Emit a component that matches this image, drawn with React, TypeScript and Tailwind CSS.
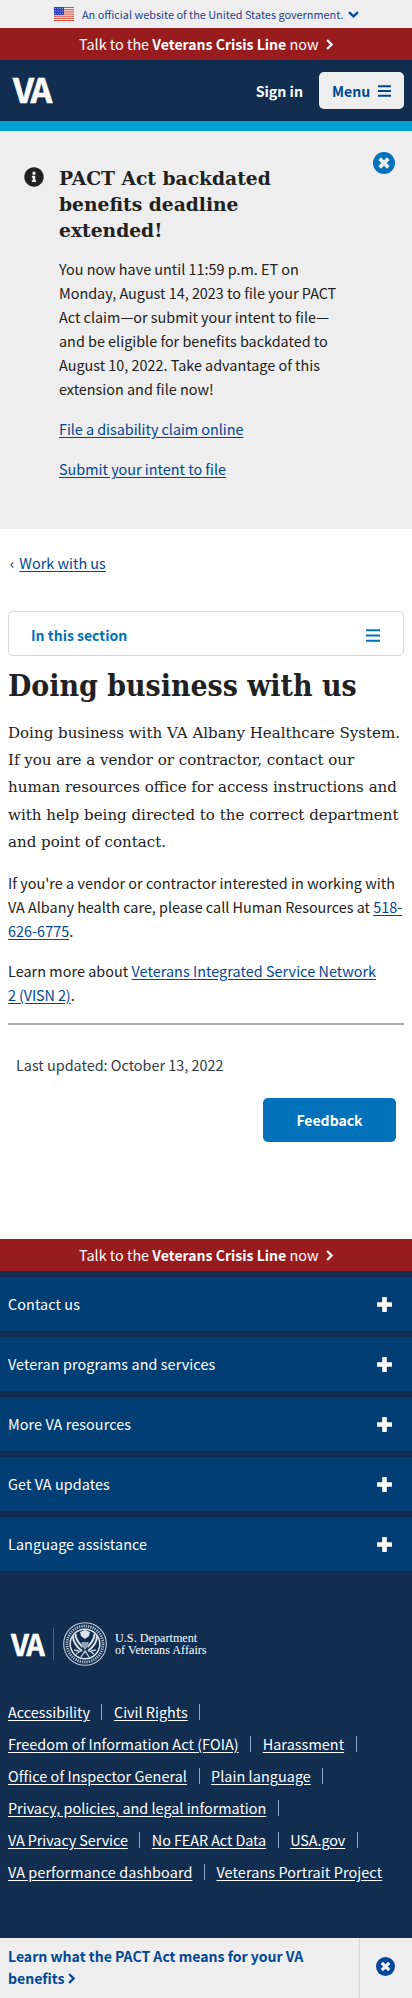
import React from "react";
import { FaInfoCircle } from "react-icons/fa";

const footerSections = [
  "Contact us",
  "Veteran programs and services",
  "More VA resources",
  "Get VA updates",
  "Language assistance",
];

const footerLinks = [
  { tracking: "tracking-[0px]", labels: ["Accessibility", "Civil Rights"] },
  {
    tracking: "tracking-[0.06px]",
    labels: ["Freedom of Information Act (FOIA)", "Harassment"],
  },
  { tracking: "tracking-[0.06px]", labels: ["Office of Inspector General", "Plain language"] },
  { tracking: "tracking-[0px]", labels: ["Privacy, policies, and legal information"] },
  {
    tracking: "tracking-[-0.07px]",
    labels: ["VA Privacy Service", "No FEAR Act Data", "USA.gov"],
  },
  {
    tracking: "tracking-[0.1px]",
    labels: ["VA performance dashboard", "Veterans Portrait Project"],
  },
];

type IconProps = { className: string };

function ChevronRight({ className }: IconProps) {
  return (
    <svg viewBox="0 0 7 11" className={className} fill="none" stroke="currentColor" strokeWidth="2.2">
      <path d="M1.1 1l4.5 4.5L1.1 10" />
    </svg>
  );
}

function ChevronDown({ className }: IconProps) {
  return (
    <svg viewBox="0 0 11 7" className={className} fill="none" stroke="currentColor" strokeWidth="2.2">
      <path d="M1 1.1l4.5 4.3L10 1.1" />
    </svg>
  );
}

function Bars({ className }: IconProps) {
  return (
    <svg viewBox="0 0 14 13" className={className} stroke="currentColor" strokeWidth="2.1">
      <path d="M0 1.3h14M0 6.5h14M0 11.7h14" />
    </svg>
  );
}

function Plus({ className }: IconProps) {
  return (
    <svg viewBox="0 0 15 15" className={className} fill="currentColor">
      <path d="M5.2.6a.6.6 0 0 1 .6-.6h3.4a.6.6 0 0 1 .6.6v4.6h4.6a.6.6 0 0 1 .6.6v3.4a.6.6 0 0 1-.6.6H9.8v4.6a.6.6 0 0 1-.6.6H5.8a.6.6 0 0 1-.6-.6V9.8H.6a.6.6 0 0 1-.6-.6V5.8a.6.6 0 0 1 .6-.6h4.6z" />
    </svg>
  );
}

function CloseCircle({ className }: IconProps) {
  return (
    <svg viewBox="0 0 22 22" className={className} fill="none">
      <circle cx="11" cy="11" r="11" fill="currentColor" />
      <path d="M6.7 6.7l8.6 8.6M15.3 6.7l-8.6 8.6" stroke="#eeeeee" strokeWidth="3.8" />
    </svg>
  );
}

function Flag() {
  return (
    <svg viewBox="0 0 20 14" className="h-[14px] w-5 shrink-0">
      <rect width="20" height="14" fill="#fff" />
      {[0, 2.15, 4.3, 6.45, 8.6, 10.75, 12.9].map((y) => (
        <rect key={y} y={y} width="20" height="1.15" fill="#dc4a35" />
      ))}
      <rect width="10" height="8" fill="#2c3fb8" />
      {[1.5, 4, 6.5].map((y) =>
        [1.5, 3.8, 6.1, 8.4].map((x) => (
          <circle key={`${x}-${y}`} cx={x} cy={y} r="0.5" fill="#c9d0f5" />
        )),
      )}
    </svg>
  );
}

function Seal() {
  return (
    <svg viewBox="0 0 44 44" className="h-11 w-11 shrink-0" fill="none">
      <circle cx="22" cy="22" r="21.3" stroke="#c3cfdb" strokeWidth="1.1" />
      <circle cx="22" cy="22" r="18" stroke="#a9b8c8" strokeWidth="2.8" strokeDasharray="1.3 1" />
      <circle cx="22" cy="22" r="14.8" stroke="#e4ebf2" strokeWidth="1.5" />
      <path
        d="M10 14c0 8 5 12 9 15M34 14c0 8-5 12-9 15M12.5 12c0 6 4 10 7 13M31.5 12c0 6-4 10-7 13"
        stroke="#dce4ec"
        strokeWidth="2"
      />
      <path d="M17 10l5-2 5 2-1 4-4 3-4-3z" fill="#dce4ec" />
      <path d="M18.5 20h7v4L22 28l-3.5-4z" fill="#8fa3b7" />
      <path
        d="M13 32l6-4M31 32l-6-4M18 35l4-6 4 6M11 28l5 1M33 28l-5 1"
        stroke="#c3cfdb"
        strokeWidth="1.3"
      />
    </svg>
  );
}

function CrisisLine() {
  return (
    <div className="flex h-8 items-center bg-[#981b1e] pl-[79px] text-white">
      <span className="w-[238px] whitespace-nowrap">
        Talk to the <b className="text-[14.05px]">Veterans Crisis Line</b> now
      </span>
      <ChevronRight className="ml-[9px] h-[11px] w-[7px]" />
    </div>
  );
}

function Link({ children }: { children: React.ReactNode }) {
  return (
    <a href="#" className="text-[#004795] underline underline-offset-2">
      {children}
    </a>
  );
}

export default function App() {
  return (
    <div className="flex h-[1998px] w-[412px] flex-col bg-white font-['Noto_Sans_CJK_SC',sans-serif] text-[14.4px] leading-6 text-[#212121]">
      <div className="flex h-7 items-center bg-[#eeeeee] pl-[54px] text-[10.9px]">
        <Flag />
        <span className="ml-2 w-[261px] whitespace-nowrap text-[#1d3f94]">
          An official website of the United States government.
        </span>
        <ChevronDown className="ml-[5px] h-[7px] w-[11px] text-[#004795]" />
      </div>
      <CrisisLine />
      <header className="flex h-[71px] items-center border-b-10 border-[#02a3d1] bg-[#112e51] pr-2 pl-[13px]">
        <span className="-mt-[3px] text-[34px] font-bold tracking-[-2.8px] text-white [-webkit-text-stroke:0.6px_white]">
          VA
        </span>
        <span className="ml-auto text-[14.2px] font-bold text-white">Sign in</span>
        <button className="ml-4 flex h-[37px] w-[85px] items-center justify-between rounded-[5px] bg-[#eeeeee] pr-[7px] pl-[13px] text-[14.1px] font-bold text-[#004795]">
          Menu
          <Bars className="mr-[6px] h-3 w-[13px]" />
        </button>
      </header>

      <section className="flex h-[398px] bg-[#eeeeee] pt-[34px] pl-6">
        <FaInfoCircle className="mt-[2px] h-5 w-5 shrink-0" />
        <div className="ml-[15px] w-[285px] shrink-0">
          <h2 className="font-['DejaVu_Serif',serif] text-[18.7px] leading-[26px] font-bold whitespace-nowrap">
            PACT Act backdated
            <br />
            benefits deadline
            <br />
            extended!
          </h2>
          <p className="mt-[14px] whitespace-nowrap">
            You now have until 11:59 p.m. ET on
            <br />
            Monday, August 14, 2023 to file your PACT
            <br />
            Act claim—or submit your intent to file—
            <br />
            and be eligible for benefits backdated to
            <br />
            August 10, 2022. Take advantage of this
            <br />
            extension and file now!
          </p>
          <p className="mt-4 tracking-[-0.04px]">
            <Link>File a disability claim online</Link>
          </p>
          <p className="mt-4">
            <Link>Submit your intent to file</Link>
          </p>
        </div>
        <CloseCircle className="mt-[-13px] ml-[29px] h-[22px] w-[22px] text-[#0071bb]" />
      </section>

      <main className="flex h-[710px] flex-col px-2 pt-[22px]">
        <nav className="flex pl-[2px]">
          <span className="mr-[5px]">‹</span>
          <Link>Work with us</Link>
        </nav>
        <button className="mt-9 flex h-[45px] items-center justify-between rounded-[5px] border border-[#d6d7d9] pt-[3px] pr-[23px] pl-[22px] text-[14px] font-bold text-[#0071bb]">
          In this section
          <Bars className="h-[13px] w-[14px]" />
        </button>
        <h1 className="mt-2 font-['DejaVu_Serif_Condensed','DejaVu_Serif',serif] text-[29.9px] leading-[43px] font-bold whitespace-nowrap">
          Doing business with us
        </h1>
        <p className="mt-[13px] font-['DejaVu_Serif',serif] text-[15.05px] leading-[27.2px] whitespace-nowrap">
          Doing business with VA Albany Healthcare System.
          <br />
          If you are a vendor or contractor, contact our
          <br />
          human resources office for access instructions and
          <br />
          with help being directed to the correct department
          <br />
          and point of contact.
        </p>
        <p className="mt-[15px] whitespace-nowrap tracking-[0.04px]">
          If you're a vendor or contractor interested in working with
          <br />
          <span className="tracking-[0px]">
            VA Albany health care, please call Human Resources at <Link>518-</Link>
          </span>
          <br />
          <Link>626-6775</Link>.
        </p>
        <p className="mt-4 tracking-[0.04px] whitespace-nowrap">
          Learn more about <Link>Veterans Integrated Service Network</Link>
          <br />
          <span className="tracking-[-0.1px]">
            <Link>2 (VISN 2)</Link>.
          </span>
        </p>
        <hr className="mt-4 border-t-2 border-[#aeb0b5]" />
        <p className="mt-7 pl-2 text-[#323a45]">Last updated: October 13, 2022</p>
        <button className="mt-[21px] mr-2 h-11 w-[133px] self-end rounded-[5px] bg-[#0071bb] text-[14px] font-bold text-white">
          Feedback
        </button>
      </main>

      <footer className="flex h-[699px] flex-col bg-[#112e51] text-white">
        <CrisisLine />
        <div className="mt-[6px] flex flex-col gap-[6px]">
          {footerSections.map((title) => (
            <button
              key={title}
              className="flex h-[54px] items-center justify-between bg-[#003e73] pr-5 pl-2 tracking-[0.08px]"
            >
              {title}
              <Plus className="h-[15px] w-[15px]" />
            </button>
          ))}
        </div>
        <div className="mt-[51px] flex h-11 items-center pl-[11px]">
          <span className="-mt-[3px] w-[42px] text-[29px] font-bold tracking-[-2.2px] [-webkit-text-stroke:0.5px_white]">
            VA
          </span>
          <span className="mr-[9px] h-8 w-px bg-[#4f6681]" />
          <Seal />
          <span className="ml-2 font-['Liberation_Serif',serif] text-[12.2px] leading-3 whitespace-nowrap">
            U.S. Department
            <br />
            of Veterans Affairs
          </span>
        </div>
        <div className="mt-[30px] flex flex-col pl-2 leading-8">
          {footerLinks.map(({ labels, tracking }, r) => (
            <div
              key={labels[0]}
              className={`flex h-8 items-center whitespace-nowrap ${tracking}`}
            >
              {labels.map((label, i) => (
                <React.Fragment key={label}>
                  <a href="#" className="underline underline-offset-2">
                    {label}
                  </a>
                  {(r < 5 || i < labels.length - 1) && (
                    <span className="mx-[11.5px] h-4 w-px bg-[#8ba6ca]" />
                  )}
                </React.Fragment>
              ))}
            </div>
          ))}
        </div>
      </footer>

      <div className="flex h-[60px] bg-[#eeeeee] text-[14.05px] font-bold text-[#004795]">
        <div className="w-[360px] border-r border-[#d6d7d9] pt-[8px] pl-2 leading-[21.6px] whitespace-nowrap">
          Learn what the PACT Act means for your VA
          <br />
          <span className="inline-flex items-center">
            benefits <ChevronRight className="ml-1 h-[11px] w-[7px]" />
          </span>
        </div>
        <div className="flex flex-1 items-center justify-center pr-px">
          <CloseCircle className="-mt-[3px] h-[19px] w-[19px]" />
        </div>
      </div>
    </div>
  );
}
